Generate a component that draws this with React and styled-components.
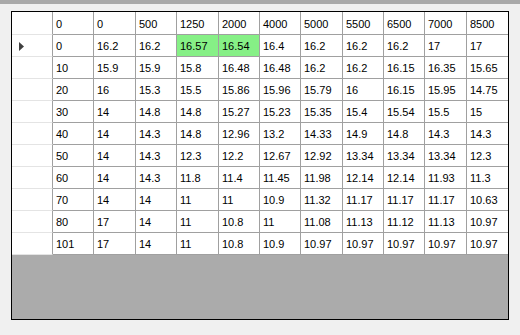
import React from "react";
import styled, { createGlobalStyle } from "styled-components";

const GlobalStyle = createGlobalStyle`
  html, body {
    margin: 0;
    padding: 0;
    background: #f0f0f0;
    font-family: "Liberation Sans", Arial, sans-serif;
  }
`;

const columns = ["0", "0", "500", "1250", "2000", "4000", "5000", "5500", "6500", "7000", "8500"];

const rows = [
  ["0", "16.2", "16.2", "16.57", "16.54", "16.4", "16.2", "16.2", "16.2", "17", "17"],
  ["10", "15.9", "15.9", "15.8", "16.48", "16.48", "16.2", "16.2", "16.15", "16.35", "15.65"],
  ["20", "16", "15.3", "15.5", "15.86", "15.96", "15.79", "16", "16.15", "15.95", "14.75"],
  ["30", "14", "14.8", "14.8", "15.27", "15.23", "15.35", "15.4", "15.54", "15.5", "15"],
  ["40", "14", "14.3", "14.8", "12.96", "13.2", "14.33", "14.9", "14.8", "14.3", "14.3"],
  ["50", "14", "14.3", "12.3", "12.2", "12.67", "12.92", "13.34", "13.34", "13.34", "12.3"],
  ["60", "14", "14.3", "11.8", "11.4", "11.45", "11.98", "12.14", "12.14", "11.93", "11.3"],
  ["70", "14", "14", "11", "11", "10.9", "11.32", "11.17", "11.17", "11.17", "10.63"],
  ["80", "17", "14", "11", "10.8", "11", "11.08", "11.13", "11.12", "11.13", "10.97"],
  ["101", "17", "14", "11", "10.8", "10.9", "10.97", "10.97", "10.97", "10.97", "10.97"],
];

// cells flagged as highlighted in the grid
const highlighted = { "0-3": true, "0-4": true };

const TopBar = styled.div`
  height: 4px;
  background: #a9a9a9;
`;

const Page = styled.div`
  padding: 7px 0 0 11px;
`;

const GridView = styled.div`
  box-sizing: border-box;
  width: 498px;
  height: 309px;
  border: 1px solid #000;
  background: #ababab;
`;

const Table = styled.div`
  display: grid;
  grid-template-columns: 41px 41px 42px 41px 42px 41px 41px 42px 41px 41px 42px 1fr;
  grid-template-rows: 23px repeat(10, 22px);
`;

const Cell = styled.div`
  box-sizing: border-box;
  display: flex;
  align-items: center;
  padding: ${(p) => (p.$header ? "2px 0 0 3px" : "0 0 0 3px")};
  font-size: 11px;
  color: #000;
  white-space: nowrap;
  overflow: hidden;
  background: ${(p) => (p.$hot ? "#86f086" : "#fff")};
  border-bottom: 1px solid #a0a0a0;
  border-right: ${(p) => (p.$last ? "none" : "1px solid #a0a0a0")};
`;

const RowHead = styled.div`
  box-sizing: border-box;
  display: flex;
  align-items: center;
  padding-left: 7px;
  background: #fff;
  border-right: 1px solid #a0a0a0;
  border-bottom: 1px solid ${(p) => (p.$corner ? "#e4e4e4" : "#e4e4e4")};
`;

const Arrow = styled.svg`
  width: 5px;
  height: 9px;
  margin-top: 1px;
`;

export default function App() {
  return (
    <>
      <GlobalStyle />
      <TopBar />
      <Page>
        <GridView>
          <Table>
            <RowHead $corner />
            {columns.map((c, i) => (
              <Cell key={"h" + i} $header $last={i === columns.length - 1}>
                {c}
              </Cell>
            ))}
            {rows.map((r, ri) => (
              <React.Fragment key={ri}>
                <RowHead>
                  {ri === 0 && (
                    <Arrow viewBox="0 0 5 9">
                      <path d="M0 0 L5 4.5 L0 9 Z" fill="#404040" />
                    </Arrow>
                  )}
                </RowHead>
                {r.map((v, ci) => (
                  <Cell
                    key={ci}
                    $hot={highlighted[`${ri}-${ci}`]}
                    $last={ci === r.length - 1}
                  >
                    {v}
                  </Cell>
                ))}
              </React.Fragment>
            ))}
          </Table>
        </GridView>
      </Page>
    </>
  );
}
